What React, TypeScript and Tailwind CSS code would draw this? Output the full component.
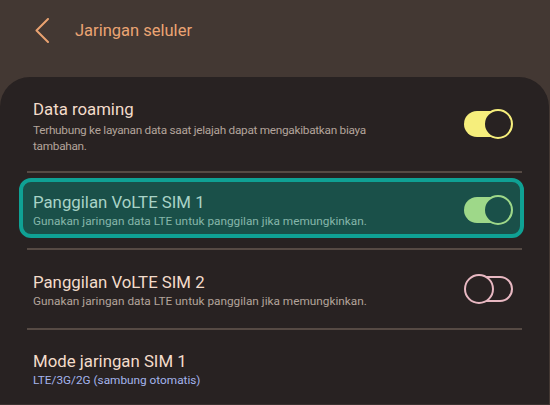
import React from "react";

function Toggle({ state }: { state: "yellow" | "green" | "off" }) {
  if (state === "off") {
    return (
      <div className="relative w-[49px] h-[30px] shrink-0">
        <div className="absolute left-[1px] top-[2px] w-[48px] h-[26px] rounded-full border-2 border-[#e8b8c2]" />
        <div className="absolute left-0 top-0 w-[30px] h-[30px] rounded-full border-2 border-[#e8b8c2] bg-[#282222]" />
      </div>
    );
  }
  const track = state === "yellow" ? "bg-[#f6ee7c]" : "bg-[#9ed889]";
  const knob =
    state === "yellow"
      ? "border-[#f6ee7c] bg-[#282222]"
      : "border-[#9ed889] bg-[#1a5049]";
  return (
    <div className="relative w-[49px] h-[30px] shrink-0">
      <div className={`absolute left-0 top-[2px] w-[46px] h-[26px] rounded-full ${track}`} />
      <div className={`absolute right-0 top-0 w-[30px] h-[30px] rounded-full border-2 ${knob}`} />
    </div>
  );
}

export default function App() {
  return (
    <div
      className="w-[550px] h-[405px] bg-[#433833] flex flex-col overflow-hidden"
      style={{ fontFamily: "Roboto, 'Noto Sans', sans-serif" }}
    >
      <header className="h-[77px] shrink-0 flex items-start pt-[18px] pl-[35px]">
        <svg width="14" height="25" viewBox="0 0 14 25" className="shrink-0">
          <path d="M13 1 L1.5 12.5 L13 24" fill="none" stroke="#e9a271" strokeWidth="2" strokeLinecap="round" strokeLinejoin="round" />
        </svg>
        <div className="ml-[26px] mt-[1px] text-[16.5px] leading-[24px] text-[#eba473]">Jaringan seluler</div>
      </header>
      <main className="flex-1 bg-[#282222] rounded-t-[30px] mr-[1px] px-[27px] border-b border-[#3a3230]">
        <div className="h-[94px] flex items-center pl-[6px] pr-[9px]">
          <div className="flex-1 pt-[3px]">
            <div className="text-[16.8px] leading-[22px] text-[#f3dccb]">Data roaming</div>
            <div className="mt-[2px] text-[11.8px] leading-[16px] tracking-[-0.28px] text-[#b3a49b]">
              Terhubung ke layanan data saat jelajah dapat mengakibatkan biaya
              <br />
              tambahan.
            </div>
          </div>
          <Toggle state="yellow" />
        </div>
        <div className="h-[2px] bg-[#564a44]" />
        <div className="mt-[5px] ml-[-8px] mr-[-2px] h-[60px] rounded-[12px] border-[4px] border-[#0fa194] bg-[#1a5049] flex items-center pl-[10px] pr-[7px] pt-[3px]">
          <div className="flex-1">
            <div className="text-[16.8px] leading-[22px] text-[#a9d3c7]">Panggilan VoLTE SIM 1</div>
            <div className="text-[11.8px] leading-[16px] text-[#86b6aa]">
              Gunakan jaringan data LTE untuk panggilan jika memungkinkan.
            </div>
          </div>
          <Toggle state="green" />
        </div>
        <div className="mt-[10px] h-[2px] bg-[#564a44]" />
        <div className="h-[78px] flex items-center pl-[6px] pr-[9px]">
          <div className="flex-1 pt-[1px]">
            <div className="text-[16.8px] leading-[22px] text-[#f3dccb]">Panggilan VoLTE SIM 2</div>
            <div className="text-[11.8px] leading-[16px] text-[#b3a49b]">
              Gunakan jaringan data LTE untuk panggilan jika memungkinkan.
            </div>
          </div>
          <Toggle state="off" />
        </div>
        <div className="h-[2px] bg-[#564a44]" />
        <div className="pt-[20px] pl-[6px]">
          <div className="text-[16.8px] leading-[22px] text-[#f3dccb]">Mode jaringan SIM 1</div>
          <div className="text-[11.8px] leading-[16px] text-[#a4b4ec]">LTE/3G/2G (sambung otomatis)</div>
        </div>
      </main>
    </div>
  );
}
